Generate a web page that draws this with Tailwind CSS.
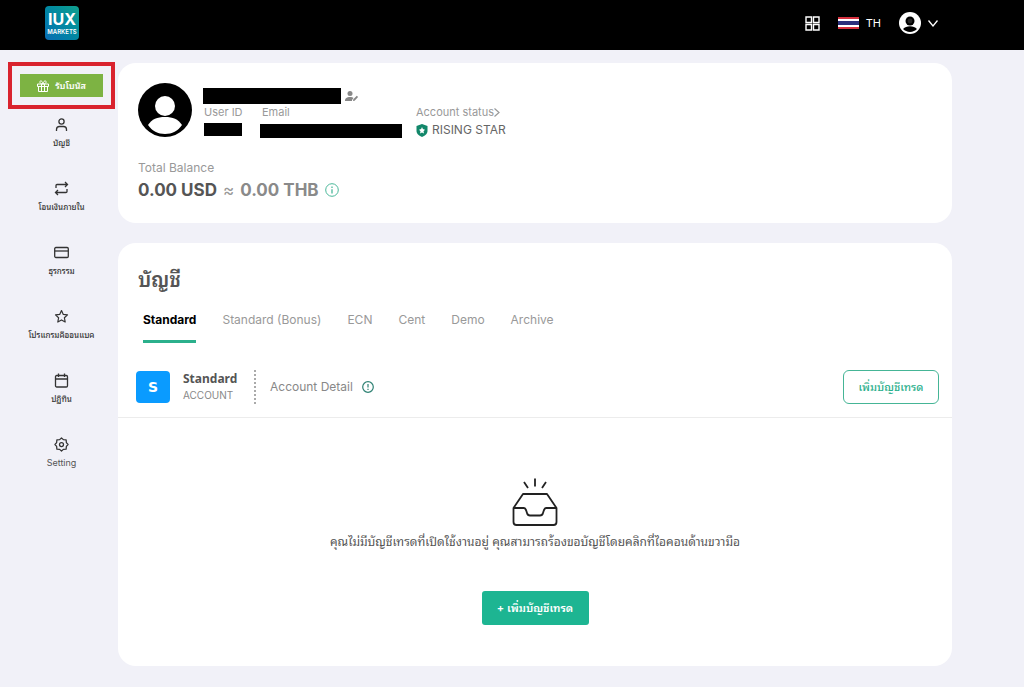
<!DOCTYPE html>
<html lang="th">
<head>
    <meta charset="UTF-8">
    <meta name="viewport" content="width=device-width, initial-scale=1.0">
    <title>IUX Markets</title>
    <script src="https://cdn.jsdelivr.net/npm/@tailwindcss/browser@4"></script>
</head>
<body class="min-h-screen bg-[#f1f1f8] font-[Inter,'Noto_Sans_Thai_Looped',Loma,Waree,'Noto_Sans_Thai','Noto_Sans',sans-serif] text-[#555]">
    <!-- Top bar -->
    <header class="flex h-[50px] items-center justify-between bg-black pr-[86px] pb-1 pl-[45px]">
        <a href="#" class="flex size-[34px] flex-col items-center justify-center rounded bg-linear-to-bl from-[#12a08c] to-[#0b6cb4] text-white">
            <span class="text-base leading-[18px] font-bold">IUX</span>
            <span class="text-[6px] leading-[8px] font-semibold">MARKETS</span>
        </a>
        <div class="flex items-center text-white">
            <button aria-label="Apps">
                <svg class="size-[15px]" viewBox="0 0 15 15" fill="none" stroke="currentColor" stroke-width="1.4">
                    <path d="M1 1h5.5v5.5H1zM8.500 1H14v5.500H8.500zM1 8.500h5.500V14H1zM8.500 8.500H14V14H8.500z"/>
                </svg>
            </button>
            <button class="ml-[18px] flex items-center gap-[7px] text-[11px]">
                <svg class="h-3 w-[21px]" viewBox="0 0 21 12">
                    <path fill="#fff" d="M0 0h21v12H0z"/>
                    <path fill="#d5303e" d="M0 0h21v2H0zM0 10h21v2H0z"/>
                    <path fill="#2b2f7c" d="M0 4h21v4H0z"/>
                </svg>
                TH
            </button>
            <button class="ml-[18px] flex items-center gap-[7px]" aria-label="Profile">
                <svg class="size-[22px]" viewBox="0 0 54 54">
                    <circle cx="27" cy="27" r="27" fill="#fff"/>
                    <circle cx="27" cy="22" r="11" fill="#000"/>
                    <circle cx="27" cy="22" r="6" fill="#222"/>
                    <path d="M10 42c4-5 10-7 17-7s13 2 17 7c-4 4-10 7-17 7s-13-3-17-7z" fill="#000"/>
                </svg>
                <svg class="h-[7px] w-2.5" viewBox="0 0 10 7" fill="none" stroke="currentColor" stroke-width="1.3"><path d="M.5.500 5 6 9.500.5"/></svg>
            </button>
        </div>
    </header>

    <div class="flex pt-3">
        <!-- Sidebar -->
        <aside class="w-[118px] shrink-0 pr-[3px] pl-2 text-[8px] leading-3 font-medium text-[#333]">
            <div class="border-4 border-[#d9232e] p-2">
                <button class="flex h-[23px] w-full items-center justify-center gap-1.5 bg-[#7db343] text-[9px] font-semibold text-white">
                    <svg class="size-3" viewBox="0 0 12 12" fill="none" stroke="currentColor"><path d="M.5 4h11v2.500H.5zM1.500 6.500v5h9v-5M4.500 4v7.500M7.500 4v7.500M6 4C4 4 2.500 3 3 1.500S5.500 1 6 4c.5-3 2.500-4 3-2.500S8 4 6 4z"/></svg>
                    รับโบนัส
                </button>
            </div>
            <nav class="mt-2 flex flex-col">
                <a href="#" class="flex h-16 flex-col items-center gap-[5px]">
                    <svg class="size-[15px]" viewBox="0 0 15 15" fill="none" stroke="currentColor" stroke-width="1.3"><circle cx="7.500" cy="4.500" r="2.600"/><path d="M2.500 14v-1.500c0-2 1-3 3-3h4c2 0 3 1 3 3V14"/></svg>
                    บัญชี
                </a>
                <a href="#" class="flex h-16 flex-col items-center gap-[5px]">
                    <svg class="size-[15px]" viewBox="0 0 15 15" fill="none" stroke="currentColor" stroke-width="1.3"><path d="M2 7V4.500c0-.6.4-1 1-1h10.500M11 1l2.500 2.500L11 6M13 8v2.500c0 .6-.4 1-1 1H1.500M4 9l-2.500 2.500L4 14"/></svg>
                    โอนเงินภายใน
                </a>
                <a href="#" class="flex h-16 flex-col items-center gap-[5px]">
                    <svg class="size-[15px]" viewBox="0 0 15 15" fill="none" stroke="currentColor" stroke-width="1.3"><rect x=".7" y="2.500" width="13.600" height="10" rx="1.200"/><path d="M.7 6h13.600"/></svg>
                    ธุรกรรม
                </a>
                <a href="#" class="flex h-16 flex-col items-center gap-[5px]">
                    <svg class="size-[15px]" viewBox="0 0 15 15" fill="none" stroke="currentColor" stroke-width="1.2" stroke-linejoin="round"><path d="m7.500 1.500 1.800 3.900 4.200.5-3.100 2.900.8 4.200-3.700-2.100L3.800 13l.8-4.200-3.100-2.900 4.200-.5z"/></svg>
                    โปรแกรมคืออนแบค
                </a>
                <a href="#" class="flex h-16 flex-col items-center gap-[5px]">
                    <svg class="size-[15px]" viewBox="0 0 15 15" fill="none" stroke="currentColor" stroke-width="1.3"><rect x="1.500" y="2.500" width="12" height="11.500" rx="1.200"/><path d="M1.500 6h12M4.500.5v3.500M10.500.5v3.500"/></svg>
                    ปฏิทิน
                </a>
                <a href="#" class="flex h-16 flex-col items-center gap-[5px] text-[9px] font-normal text-[#555]">
                    <svg class="size-[15px] text-[#333]" viewBox="0 0 24 24" fill="none" stroke="currentColor" stroke-width="2"><circle cx="12" cy="12" r="3.200"/><path stroke-linejoin="round" d="m12 1.500 3 2.700 4.400.4.400 4.400 2.700 3-2.700 3-.4 4.400-4.400.4-3 2.700-3-2.700-4.400-.4-.4-4.400-2.700-3 2.700-3 .4-4.400L9 4.200z"/></svg>
                    Setting
                </a>
            </nav>
        </aside>

        <main class="mt-px mr-[72px] flex flex-1 flex-col gap-5">
            <!-- Profile -->
            <section class="h-40 rounded-[18px] bg-white p-5">
                <div class="flex">
                    <svg class="size-[54px]" viewBox="0 0 54 54">
                        <circle cx="27" cy="27" r="27"/>
                        <circle cx="27" cy="23" r="10" fill="#fff"/>
                        <path d="M10 42c4-6 9-8 17-8s13 2 17 8c-4 6-10 9-17 9s-13-3-17-9z" fill="#fff"/>
                    </svg>
                    <div class="mt-[5px] ml-[11px]">
                        <div class="flex items-center gap-1">
                            <span class="h-4 w-[138px] bg-black"></span>
                            <button aria-label="Edit profile">
                                <svg class="h-3 w-[14px]" viewBox="0 0 14 12" fill="#888"><circle cx="5" cy="3.500" r="2.500"/><path d="M0 11c0-3 2-4 5-4 1.500 0 2.700.3 3.500 1L7 10v1zM8 11l.3-1.700 3.500-3.500 1.300 1.300L9.600 10.700z"/></svg>
                            </button>
                        </div>
                        <div class="flex text-[11px] leading-4 text-[#999]">
                            <div class="w-[57px] pl-px">
                                User ID
                                <div class="mt-[3px] h-[13px] w-[38px] bg-black"></div>
                            </div>
                            <div class="w-[156px]">
                                <span class="pl-0.5">Email</span>
                                <div class="mt-1 h-[14px] w-[142px] bg-black"></div>
                            </div>
                            <div>
                                <a href="#" class="flex items-center">
                                    Account status
                                    <svg class="h-[9px] w-1.5" viewBox="0 0 6 9" fill="none" stroke="currentColor" stroke-width="1.200"><path d="m.5.500 4.500 4-4.500 4"/></svg>
                                </a>
                                <div class="mt-0.5 flex items-center gap-1 text-[12px] text-[#666]">
                                    <svg class="h-[13px] w-3" viewBox="0 0 12 13"><path d="M6 0 11.500 2v5c0 3-3 5-5.500 6C3.500 12 .5 10 .5 7V2z" fill="#12876a"/><path d="m6 3 .9 2L9 5.800 7.500 7.300 8 9.500 6 8.500 4 9.500l.5-2.200L3 5.800 5.100 5z" fill="#fff"/></svg>
                                    RISING STAR
                                </div>
                            </div>
                        </div>
                    </div>
                </div>
                <p class="mt-[22px] text-[12px] leading-4 text-[#999]">Total Balance</p>
                <p class="mt-0.5 flex items-center gap-1.5 text-[17px] leading-6 font-bold text-[#555]">
                    <span>0.00 USD</span>
                    <span class="font-normal text-[#999]">≈</span>
                    <span class="text-[#8a8a8a]">0.00 THB</span>
                    <svg class="size-[14px]" viewBox="0 0 14 14" fill="none" stroke="#4bb89a"><circle cx="7" cy="7" r="6.300"/><path d="M7 6.200V10.500M7 3.500V5" stroke-width="1.300"/></svg>
                </p>
            </section>

            <!-- Accounts -->
            <section class="h-[423px] rounded-[18px] bg-white">
                <h1 class="px-5 pt-[23px] text-[20px] leading-7 font-semibold">บัญชี</h1>
                <div role="tablist" class="mt-4 flex gap-[26px] px-[25px] text-[12px] leading-5 text-[#999]">
                    <button role="tab" aria-selected="true" class="h-[33px] border-b-3 border-[#2bb08c] pb-[10px] font-bold text-black">Standard</button>
                    <button role="tab" class="h-[33px] pb-[13px]">Standard (Bonus)</button>
                    <button role="tab" class="h-[33px] pb-[13px]">ECN</button>
                    <button role="tab" class="h-[33px] pb-[13px]">Cent</button>
                    <button role="tab" class="h-[33px] pb-[13px]">Demo</button>
                    <button role="tab" class="h-[33px] pb-[13px]">Archive</button>
                </div>
                <div class="flex h-[75px] items-center border-b border-[#ececec] pt-[14px] pr-[13px] pl-[18px]">
                    <div class="flex h-8 w-[34px] items-center justify-center rounded bg-[#0a9bff] font-['DejaVu_Sans',sans-serif] text-[14px] font-bold text-white">S</div>
                    <div class="ml-[13px] w-[73px] border-r-2 border-dotted border-[#aaa] py-px text-[11px] leading-4 text-[#888]">
                        <div class="font-['Noto_Sans',sans-serif] text-[12px] font-bold text-[#555]">Standard</div>
                        <span class="text-[10px]">ACCOUNT</span>
                    </div>
                    <div class="ml-[14px] flex items-center gap-[9px] text-[12px] text-[#888]">
                        Account Detail
                        <svg class="size-3" viewBox="0 0 12 12" fill="none" stroke="#2f8274" stroke-width="1.200"><circle cx="6" cy="6" r="5.300"/><path d="M6 3v3.500M6 7.700V9"/></svg>
                    </div>
                    <button class="ml-auto h-[34px] w-24 rounded-md border border-[#45b596] text-[11px] font-medium whitespace-nowrap text-[#2bb08c]">เพิ่มบัญชีเทรด</button>
                </div>
                <div class="flex flex-col items-center pt-[60px]">
                    <svg class="h-12 w-[46px]" viewBox="0 0 46 48" fill="none" stroke="#222" stroke-width="1.800" stroke-linejoin="round">
                        <path d="M12 4l4 6M23 .5v8M34 4l-4 6M1.500 30 11 16h24l9.500 14v14c0 1.700-1.300 3-3 3h-37c-1.700 0-3-1.300-3-3zM1.500 30H12c2 0 2 2 3 5 .5 2 1 2.500 3 2.500h10c2 0 2.500-.5 3-2.500 1-3 1-5 3-5h10.500"/>
                    </svg>
                    <p class="mt-1.5 text-[12px] leading-5">คุณไม่มีบัญชีเทรดที่เปิดใช้งานอยู่ คุณสามารถร้องขอบัญชีโดยคลิกที่ไอคอนด้านขวามือ</p>
                    <button class="mt-[39px] h-[34px] w-[107px] rounded-[3px] bg-[#1db592] text-[11px] font-semibold whitespace-nowrap text-white">+ เพิ่มบัญชีเทรด</button>
                </div>
            </section>
        </main>
    </div>
</body>
</html>
